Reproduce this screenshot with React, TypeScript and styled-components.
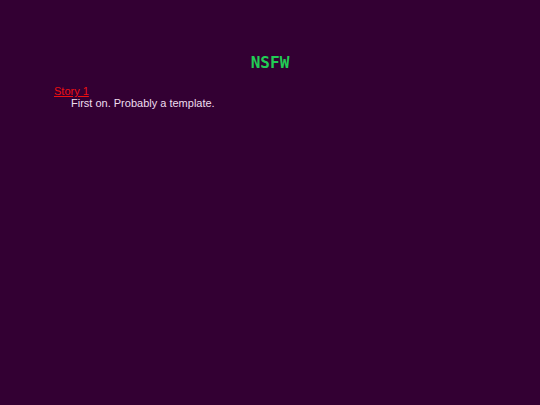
import React from "react";
import styled, { createGlobalStyle } from "styled-components";

const GlobalStyle = createGlobalStyle`
  html, body {
    margin: 0;
    padding: 0;
    background: #330033;
    height: 100%;
  }
  body {
    font-family: "Liberation Sans", Arial, sans-serif;
  }
`;

const Page = styled.div`
  min-height: 405px;
  padding: 52px 0 0 54px;
  box-sizing: border-box;
`;

const Title = styled.h1`
  margin: 0 0 11px -54px;
  text-align: center;
  font-family: "DejaVu Sans Mono", monospace;
  font-size: 16px;
  font-weight: bold;
  color: #22cc55;
  line-height: 22px;
`;

const StoryList = styled.dl`
  margin: 0;
`;

const StoryTitle = styled.dt`
  font-size: 11px;
  line-height: 12px;
  a {
    color: #ee1111;
    text-decoration: underline;
  }
`;

const StoryBody = styled.dd`
  margin: 0 0 0 17px;
  font-size: 11px;
  line-height: 13px;
  color: #eeddee;
`;

const stories = [
  { title: "Story 1", blurb: "First on. Probably a template." },
];

export default function App() {
  return (
    <>
      <GlobalStyle />
      <Page>
        <Title>NSFW</Title>
        <StoryList>
          {stories.map((s) => (
            <React.Fragment key={s.title}>
              <StoryTitle>
                <a href="#">{s.title}</a>
              </StoryTitle>
              <StoryBody>{s.blurb}</StoryBody>
            </React.Fragment>
          ))}
        </StoryList>
      </Page>
    </>
  );
}
